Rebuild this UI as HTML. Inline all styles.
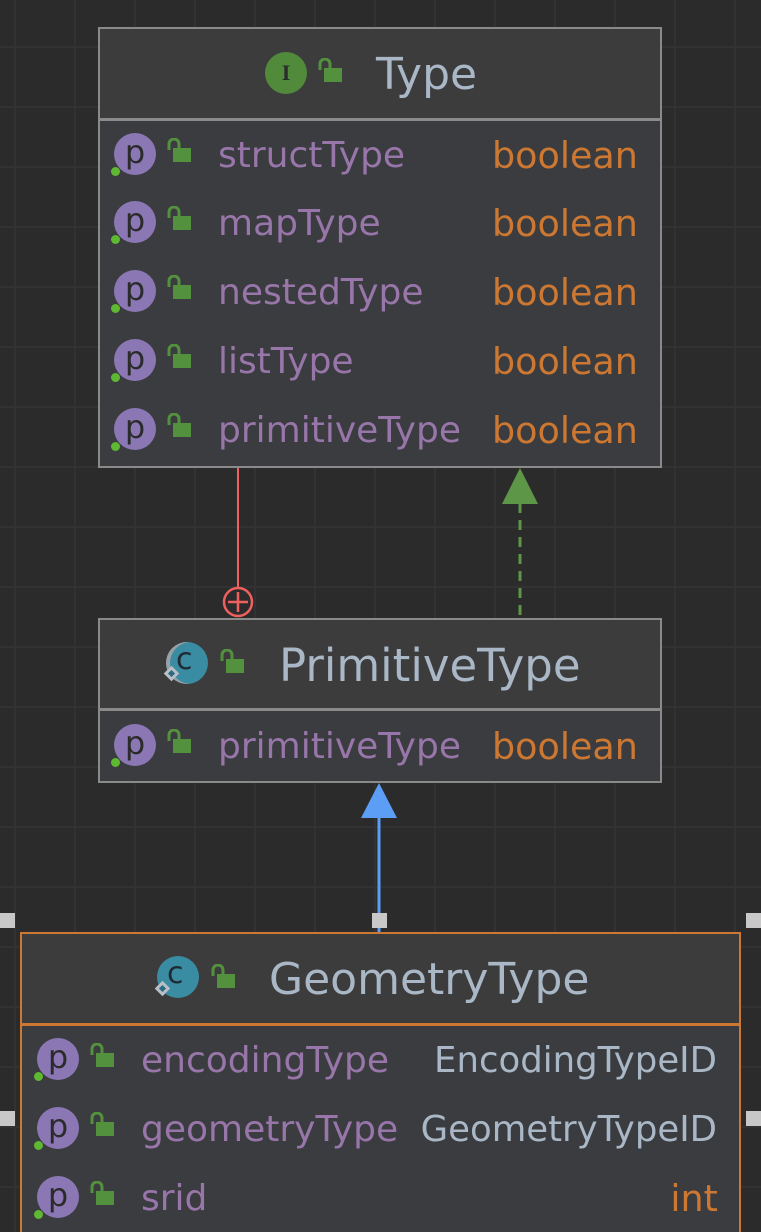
<!DOCTYPE html>
<html><head><meta charset="utf-8"><style>
*{margin:0;padding:0;box-sizing:border-box}
html,body{width:761px;height:1232px;overflow:hidden}
body{position:relative;background-color:#2b2b2b;
background-image:linear-gradient(90deg,#323232 2px,transparent 2px),linear-gradient(#323232 2px,transparent 2px);
background-size:60px 60px;background-position:14px 46px;
font-family:"DejaVu Sans","Liberation Sans",sans-serif}
.box{position:absolute;background:#3a3c3f;border:2px solid #8a8a8a}
.hdr{position:absolute;left:0;right:0;top:0;background:#3c3c3c;border-bottom:3px solid #8a8a8a}
.t{position:absolute;white-space:nowrap;line-height:1}
.title{font-size:44px;color:#a9b7c6}
.f{font-size:36px;color:#9876aa}
.ty{font-size:36.5px;color:#cc7832}
.ty2{font-size:35.5px;color:#a9b7c6}
.p{position:absolute;width:42px;height:42px;border-radius:50%;background:#8c77b5;color:#2b2b2b;font-size:32px;text-align:center;line-height:38px}
.dot{position:absolute;width:9px;height:9px;border-radius:50%;background:#5fb832}
.lock{position:absolute;width:26px;height:26px}
.sq{position:absolute;width:15px;height:15px;background:#c8c8c8}
</style></head><body>
<svg width="761" height="1232" style="position:absolute;left:0;top:0">
<line x1="238" y1="467" x2="238" y2="588" stroke="#f0605e" stroke-width="2"/>
<circle cx="238" cy="602" r="14" fill="none" stroke="#f0605e" stroke-width="2.5"/>
<line x1="228" y1="602" x2="248" y2="602" stroke="#f0605e" stroke-width="2.5"/>
<line x1="238" y1="592" x2="238" y2="612" stroke="#f0605e" stroke-width="2.5"/>
<line x1="520" y1="503" x2="520" y2="618" stroke="#5e9648" stroke-width="3" stroke-dasharray="10,7"/>
<polygon points="520,468 502,504 538,504" fill="#5e9648"/>
<line x1="379" y1="815" x2="379" y2="932" stroke="#5c9ef5" stroke-width="3"/>
<polygon points="379,783 361,818 397,818" fill="#5c9ef5"/>
</svg>

<div class="box" style="left:98px;top:27px;width:564px;height:441px">
 <div class="hdr" style="height:92px"></div>
</div>
<div style="position:absolute;left:265px;top:52px;width:42px;height:42px;border-radius:50%;background:#528a3c;color:#2b2b2b;font:bold 22px 'Liberation Serif',serif;text-align:center;line-height:42px">I</div>
<svg class="lock" style="left:318px;top:58px" viewBox="0 0 26 26"><rect x="6" y="10" width="18" height="14" fill="#54913f"/><path d="M2 12V6a5 5 0 0 1 10 0v4" fill="none" stroke="#54913f" stroke-width="3"/></svg>
<div class="t title" style="left:376px;top:53px">Type</div>

<div class="box" style="left:98px;top:618px;width:564px;height:165px">
 <div class="hdr" style="height:91px"></div>
</div>
<div style="position:absolute;left:166px;top:642px;width:42px;height:42px;border-radius:50%;background:#3a8ca3;box-shadow:inset 4px 0 0 #9aa0a6"></div>
<div class="t" style="left:176px;top:645px;font-size:30px;color:#1f2a33">c</div>
<div style="position:absolute;left:166px;top:668px;width:11px;height:11px;background:#2b6a80;border:3px solid #b8bfc6;transform:rotate(45deg)"></div>
<svg class="lock" style="left:220px;top:649px" viewBox="0 0 26 26"><rect x="6" y="10" width="18" height="14" fill="#54913f"/><path d="M2 12V6a5 5 0 0 1 10 0v4" fill="none" stroke="#54913f" stroke-width="3"/></svg>
<div class="t title" style="left:279px;top:643px;font-size:45px">PrimitiveType</div>

<div class="box" style="left:20px;top:932px;width:721px;height:320px;border-color:#cc7832">
 <div class="hdr" style="height:92px;border-bottom-color:#cc7832"></div>
</div>
<div style="position:absolute;left:157px;top:956px;width:42px;height:42px;border-radius:50%;background:#3a8ca3"></div>
<div class="t" style="left:167px;top:959px;font-size:30px;color:#1f2a33">c</div>
<div style="position:absolute;left:157px;top:983px;width:11px;height:11px;background:#2b6a80;border:3px solid #b8bfc6;transform:rotate(45deg)"></div>
<svg class="lock" style="left:211px;top:964px" viewBox="0 0 26 26"><rect x="6" y="10" width="18" height="14" fill="#54913f"/><path d="M2 12V6a5 5 0 0 1 10 0v4" fill="none" stroke="#54913f" stroke-width="3"/></svg>
<div class="t title" style="left:269px;top:958px">GeometryType</div>

<div class="sq" style="left:0;top:913px"></div>
<div class="sq" style="left:372px;top:913px"></div>
<div class="sq" style="left:746px;top:913px"></div>
<div class="sq" style="left:0;top:1111px"></div>
<div class="sq" style="left:746px;top:1111px"></div>

<div id="rows"></div>
<script>
var rows=[
[135,154,"structType","boolean",0],[135,222,"mapType","boolean",0],[135,291,"nestedType","boolean",0],
[135,360,"listType","boolean",0],[135,429,"primitiveType","boolean",0],[135,745,"primitiveType","boolean",0],
[58,1059,"encodingType","EncodingTypeID",1],[58,1128,"geometryType","GeometryTypeID",1],[58,1197,"srid","int",2]];
var h="";
rows.forEach(function(r){
 var cx=r[0],cy=r[1];
 h+='<div class="p" style="left:'+(cx-21)+'px;top:'+(cy-21)+'px">p</div>';
 h+='<div class="dot" style="left:'+(cx-24)+'px;top:'+(cy+13)+'px"></div>';
 h+='<svg class="lock" style="left:'+(cx+32)+'px;top:'+(cy-16)+'px" viewBox="0 0 26 26"><rect x="6" y="10" width="18" height="14" fill="#54913f"/><path d="M2 12V6a5 5 0 0 1 10 0v4" fill="none" stroke="#54913f" stroke-width="3"/></svg>';
 h+='<div class="t f" style="left:'+(cx+83)+'px;top:'+(cy-16)+'px">'+r[2]+'</div>';
 if(r[4]==0) h+='<div class="t ty" style="left:492px;top:'+(cy-16)+'px">'+r[3]+'</div>';
 else if(r[4]==1) h+='<div class="t ty2" style="right:44px;top:'+(cy-16)+'px">'+r[3]+'</div>';
 else h+='<div class="t ty" style="right:43px;top:'+(cy-16)+'px">'+r[3]+'</div>';
});
document.getElementById("rows").innerHTML=h;
</script>
</body></html>
